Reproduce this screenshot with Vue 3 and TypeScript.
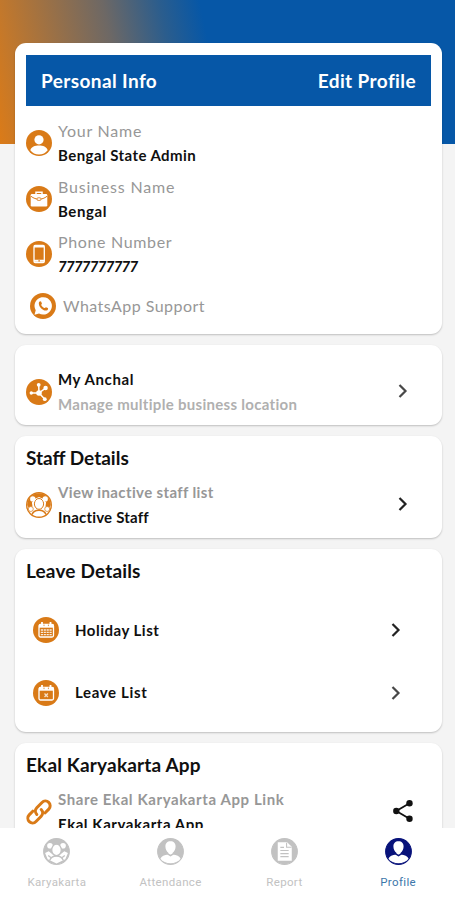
<script setup lang="ts">
import { ref } from 'vue'

interface Info { icon: string; label: string; value: string; labelClass: string; valueClass: string }
interface Tab { id: string; label: string; icon: string }

const infos: Info[] = [
  { icon: 'person', label: 'Your Name', value: 'Bengal State Admin', labelClass: 'l-name', valueClass: 'v-name' },
  { icon: 'bag', label: 'Business Name', value: 'Bengal', labelClass: 'l-biz', valueClass: 'v-biz' },
  { icon: 'phone', label: 'Phone Number', value: '7777777777', labelClass: 'l-phone', valueClass: 'v-phone' },
]
const leaves = [
  { label: 'Holiday List', kind: 'grid', cls: 'holiday' },
  { label: 'Leave List', kind: 'x', cls: 'leave' },
]
const tabs: Tab[] = [
  { id: 'karyakarta', label: 'Karyakarta', icon: 'group' },
  { id: 'attendance', label: 'Attendance', icon: 'user' },
  { id: 'report', label: 'Report', icon: 'doc' },
  { id: 'profile', label: 'Profile', icon: 'user' },
]
const active = ref('profile')
</script>

<template>
  <div class="screen">
    <main class="content">
      <section class="card personal">
        <header class="bar">
          <span class="bar-title">Personal Info</span>
          <span class="bar-edit">Edit Profile</span>
        </header>
        <div v-for="i in infos" :key="i.label" class="row info">
          <svg class="ico" viewBox="0 0 26 26">
            <circle cx="13" cy="13" r="13" fill="#d97a17" />
            <template v-if="i.icon === 'person'">
              <circle cx="13" cy="9.800" r="4.600" fill="#fff" />
              <path d="M4.300 20.200c1-3.500 4.700-4.700 8.700-4.700s7.700 1.200 8.700 4.700c-2 2.800-5.200 4.300-8.700 4.300s-6.700-1.500-8.700-4.300z" fill="#fff" />
            </template>
            <template v-else-if="i.icon === 'bag'">
              <path d="M10 8V6.300h6V8" fill="none" stroke="#fff" stroke-width="1.500" />
              <rect x="4.700" y="8" width="16.600" height="12.500" rx="1.300" fill="#fff" />
              <path d="M5 10.300c5 3.900 11 3.900 16 0" fill="none" stroke="#d97a17" stroke-width="1" />
              <rect x="11.200" y="11.800" width="3.600" height="2.600" rx=".6" fill="#fff" stroke="#d97a17" stroke-width=".8" />
            </template>
            <template v-else>
              <rect x="8" y="4.500" width="10.300" height="17" rx="1.200" fill="none" stroke="#fff" stroke-width="1.300" />
              <path d="M8 19.700h10.300M8 5.500h10.300" stroke="#fff" stroke-width="1.900" />
              <circle cx="13.100" cy="19.900" r=".8" fill="#d97a17" />
            </template>
          </svg>
          <div class="pair">
            <span class="label" :class="i.labelClass">{{ i.label }}</span>
            <span class="value" :class="i.valueClass">{{ i.value }}</span>
          </div>
        </div>
        <div class="row support">
          <svg class="ico" viewBox="0 0 26 26">
            <circle cx="13" cy="13" r="13" fill="#d97a17" />
            <path d="M4.500 21.800l1.200-4.500a8.700 8.700 0 1 1 3.300 3.200z" fill="#fff" />
            <path d="M9.300 8.700c.6-.8 1.600-.7 1.900.1l.7 1.700c.1.500-.8 1.100-.7 1.500.7 1.500 1.700 2.400 3.200 3 .5.200 1.100-1 1.600-.8l1.800.9c.6.400.2 1.700-.5 2.100-2 1-4.300-.1-6-1.800-1.700-1.600-3.300-4.600-2-6.700z" fill="#d97a17" />
          </svg>
          <span class="label l-wa">WhatsApp Support</span>
        </div>
      </section>

      <section class="card anchal">
        <div class="row">
          <svg class="ico" viewBox="0 0 26 26">
            <circle cx="13" cy="13" r="13" fill="#d97a17" />
            <path d="M13 14L12.700 6M13 14H5.500M13 14l6.500-4.800M13 14l5.600 6" stroke="#fff" stroke-width="1.500" />
            <circle cx="13" cy="14" r="2.800" fill="#fff" />
            <circle cx="12.700" cy="5.800" r="1.900" fill="#fff" />
            <circle cx="5.300" cy="14" r="1.700" fill="#fff" />
            <circle cx="19.600" cy="9" r="2.200" fill="#fff" />
            <circle cx="18.800" cy="20.200" r="1.900" fill="#fff" />
          </svg>
          <div class="pair">
            <span class="value v-anchal">My Anchal</span>
            <span class="label strong pale l-anchal">Manage multiple business location</span>
          </div>
          <svg class="chev soft" viewBox="0 0 10 14"><path d="M1.500 1l6 6-6 6" /></svg>
        </div>
      </section>

      <section class="card staff">
        <h2 class="h-staff">Staff Details</h2>
        <div class="row">
          <svg class="ico" viewBox="0 0 26 26">
            <circle cx="13" cy="13" r="12.300" fill="#fff" stroke="#d97a17" stroke-width="1.400" />
            <path d="M1.200 13A11.800 11.800 0 0 1 24.800 13l-1.600 3-3.700-1.500.6-4-2.800-3.400-4.300-2-4.300 2-2.800 3.400.6 4L2.800 16z" fill="#d97a17" />
            <ellipse cx="13" cy="11.900" rx="4.600" ry="5.400" fill="#fff" stroke="#d97a17" />
            <circle cx="6.800" cy="6.900" r="2.700" fill="#fff" />
            <circle cx="19.200" cy="6.900" r="2.700" fill="#fff" />
            <circle cx="4.800" cy="17" r="2.500" fill="#fff" stroke="#d97a17" stroke-width=".7" />
            <circle cx="21.200" cy="17" r="2.500" fill="#fff" stroke="#d97a17" stroke-width=".7" />
            <path d="M6 22.500c1-3 3.600-4.300 7-4.300s6 1.300 7 4.300" fill="none" stroke="#d97a17" stroke-width="1.500" />
          </svg>
          <div class="pair">
            <span class="label strong l-staff">View inactive staff list</span>
            <span class="value v-staff">Inactive Staff</span>
          </div>
          <svg class="chev" viewBox="0 0 10 14"><path d="M1.500 1l6 6-6 6" /></svg>
        </div>
      </section>

      <section class="card leaves">
        <h2 class="h-leave">Leave Details</h2>
        <div v-for="l in leaves" :key="l.label" class="row leave-row">
          <svg class="ico" viewBox="0 0 26 26">
            <circle cx="13" cy="13" r="13" fill="#d97a17" />
            <rect x="6" y="7.500" width="14.500" height="12.500" rx="1.500" fill="none" stroke="#fff" stroke-width="1.300" />
            <path d="M6 9h14.500" stroke="#fff" stroke-width="3.400" />
            <path d="M9 5v3.500M17.500 5v3.500" stroke="#fff" stroke-width="1.800" />
            <path d="M11 7.600v1.500M15.400 7.600v1.500" stroke="#d97a17" stroke-width=".8" />
            <path v-if="l.kind === 'grid'" d="M7.800 13h11M7.800 15.300h11M7.800 17.600h11" stroke="#fff" stroke-width="1.300" stroke-dasharray="2.200 .7" opacity=".85" />
            <path v-else d="M11.500 13.500l3.400 3.400m0-3.400l-3.400 3.400" stroke="#fff" stroke-width="1.400" opacity=".75" />
          </svg>
          <span class="value" :class="l.cls">{{ l.label }}</span>
          <svg class="chev" :class="{ soft: l.kind === 'x' }" viewBox="0 0 10 14"><path d="M1.500 1l6 6-6 6" /></svg>
        </div>
      </section>

      <section class="card app">
        <h2 class="h-app">Ekal Karyakarta App</h2>
        <div class="row">
          <svg class="ico" viewBox="0 0 26 26" fill="none" stroke="#d97a17" stroke-width="3" stroke-linecap="round" stroke-linejoin="round">
            <path d="M10.800 15.500a4.900 4.900 0 0 1 0-6.800l5.200-5.200a4.700 4.700 0 0 1 6.800 6.600l-3.600 3.700" />
            <path d="M15.200 10.500a4.900 4.900 0 0 1 0 6.800L10 22.500a4.700 4.700 0 0 1-6.800-6.600l3.600-3.700" />
          </svg>
          <div class="pair">
            <span class="label strong l-app">Share Ekal Karyakarta App Link</span>
            <span class="value v-app">Ekal Karyakarta App</span>
          </div>
          <svg class="share" viewBox="0 0 20 22">
            <path d="M16.500 3.300L3.300 11l13.200 7.700" fill="none" stroke="#111" stroke-width="1.800" />
            <circle cx="16.500" cy="3.300" r="3.200" fill="#111" /><circle cx="3.300" cy="11" r="3.200" fill="#111" /><circle cx="16.500" cy="18.700" r="3.200" fill="#111" />
          </svg>
        </div>
      </section>
    </main>

    <nav class="tabs">
      <button v-for="t in tabs" :key="t.id" class="tab" :class="[t.id, { active: active === t.id }]" @click="active = t.id">
        <svg class="tab-ico" viewBox="0 0 26 26">
          <circle cx="13" cy="13" r="12.400" fill="currentColor" stroke="currentColor" />
          <template v-if="t.icon === 'user'">
            <path d="M13 3.200c-3.200 0-4.900 2-4.900 4.900 0 2.800 1.400 4.900 2.800 6.100v1.600c-3.900.4-6.500 1.500-7.600 4.300 2.100 2.700 5.600 4.300 9.700 4.300s7.600-1.600 9.700-4.300c-1.100-2.800-3.700-3.900-7.600-4.300v-1.600c1.400-1.200 2.800-3.300 2.800-6.100 0-2.900-1.700-4.900-4.900-4.900z" fill="#fff" />
            <path d="M10.300 15.300l2.700 1.600 2.700-1.600" fill="none" stroke="currentColor" stroke-width="1.500" />
          </template>
          <template v-else-if="t.icon === 'doc'">
            <path d="M6.500 4h9l4.500 4.500V22H6.500z" fill="#fff" />
            <path d="M15 4.500V9h4.800" fill="none" stroke="currentColor" />
            <path d="M9 12h8M9 15h8M9 18h8M9 9h3.500" stroke="currentColor" stroke-width="1.100" />
          </template>
          <template v-else>
            <circle cx="6.700" cy="7.400" r="2.700" fill="#fff" />
            <circle cx="19.300" cy="7.400" r="2.700" fill="#fff" />
            <path d="M2 14.500l3.500-1.800 3.500 3 4 1 4-1 3.500-3 3.500 1.800-2.500 6-8.500 4-8.500-4z" fill="#fff" />
            <ellipse cx="13" cy="11.500" rx="4.600" ry="5.500" fill="#fff" stroke="currentColor" stroke-width="1.200" />
            <path d="M6.500 21.500c1-3 3.500-4.200 6.500-4.200s5.500 1.200 6.500 4.200M5 16.800l2.500 2M21 16.800l-2.500 2" fill="none" stroke="currentColor" stroke-width="1.300" />
          </template>
        </svg>
        <span class="tab-label">{{ t.label }}</span>
      </button>
    </nav>
  </div>
</template>

<style>
body { margin: 0; background: #f4f4f4; }
</style>

<style scoped>
* { box-sizing: border-box; }
.screen {
  width: 455px; height: 900px; overflow: hidden; display: flex; flex-direction: column;
  font-family: Lato, "Open Sans", sans-serif; color: #101010;
  background: linear-gradient(78deg, #db7b18 0px, #c3782b 28px, #6d6865 130px, #2b5d8d 185px, #0657a7 225px) top / 100% 144px no-repeat, #f4f4f4;
}
.content { flex: 1; min-height: 0; overflow: hidden; display: flex; flex-direction: column; gap: 11px; padding: 43px 13px 0 15px; }
.card { flex: none; background: #fff; border-radius: 11px; padding: 12px 11px; box-shadow: 0 1px 2px rgba(0, 0, 0, .22); }
.personal { height: 291px; }
.bar { height: 51px; background: #0657a7; color: #fff; display: flex; align-items: center; justify-content: space-between; padding: 0 15px; font-size: 19px; font-weight: 700; letter-spacing: .4px; white-space: nowrap; margin-bottom: 13px; }
.row { display: flex; align-items: center; }
.info { height: 55.500px; align-items: flex-start; }
.info .ico { margin-top: 11px; }
.info .pair { margin-top: -1px; }
.ico { width: 26px; height: 26px; flex: none; display: block; }
.pair { display: flex; flex-direction: column; align-items: flex-start; margin-left: 6px; }
.label, .value { display: block; line-height: 25px; white-space: nowrap; }
.label { font-size: 16px; color: #979797; }
.value { font-size: 15px; font-weight: 700; }
.strong { font-size: 15px; font-weight: 700; }
.pale { color: #b0b0b0; }
.l-name { letter-spacing: .75px; }
.l-biz { letter-spacing: .8px; }
.l-phone { letter-spacing: .65px; }
.l-wa { letter-spacing: .45px; }
.l-anchal { letter-spacing: .3px; }
.l-staff { letter-spacing: .37px; }
.l-app { letter-spacing: .6px; }
.v-name { letter-spacing: .43px; }
.v-biz { letter-spacing: .6px; }
.v-phone { font-style: italic; letter-spacing: -.75px; }
.v-anchal { letter-spacing: .6px; }
.v-staff { letter-spacing: .2px; }
.v-app { letter-spacing: .55px; }
.holiday { letter-spacing: .5px; }
.leave { letter-spacing: .65px; }
.support { padding-left: 4px; margin-top: 7px; }
.support .label { margin-left: 7px; }
.anchal { height: 80px; padding-top: 22px; }
.anchal .chev { margin-bottom: 2px; }
.staff { height: 102px; padding-top: 10px; }
.staff .row { margin-top: 10px; }
.staff .chev { margin-bottom: 2px; }
.leaves { height: 183px; padding-top: 10px; }
.app { height: 125px; padding-top: 10px; }
.app .row { margin-top: 10px; }
.app .share { margin-bottom: 3px; }
h2 { margin: 0; font-size: 19px; line-height: 24px; font-weight: 700; white-space: nowrap; }
.h-leave, .h-app { letter-spacing: .17px; }
.chev { width: 10px; height: 14px; margin-left: auto; margin-right: 23px; fill: none; stroke: #222; stroke-width: 2.200; }
.soft { stroke: #484848; }
.leave-row { height: 62.500px; padding-left: 7px; }
.h-leave + .leave-row { margin-top: 16px; }
.leave-row .value { margin-left: 16px; }
.leave-row .chev { margin-right: 30px; }
.share { width: 20px; height: 22px; margin-left: auto; margin-right: 18px; }
.tabs { height: 72px; flex: none; background: #fff; display: grid; grid-template-columns: repeat(4, 1fr); }
.tab { border: 0; background: none; padding: 10px 0 0; margin: 0; font-family: Roboto, sans-serif; color: #c2c2c2; display: flex; flex-direction: column; align-items: center; gap: 8px; }
.tab-ico { width: 27px; height: 27px; }
.tab-label { font-size: 11.500px; line-height: 18px; letter-spacing: .35px; }
.active { color: #08127a; }
.active .tab-label { color: #3d77aa; }
</style>
